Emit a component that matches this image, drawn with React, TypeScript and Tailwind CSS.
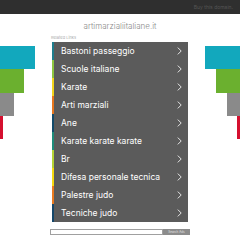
const links = [
  { label: "Bastoni passeggio", stripe: "border-[#1e7d8c]" },
  { label: "Scuole italiane", stripe: "border-[#8dc63f]" },
  { label: "Karate", stripe: "border-[#f2d51c]" },
  { label: "Arti marziali", stripe: "border-[#e8771e]" },
  { label: "Ane", stripe: "border-[#134b6b]" },
  { label: "Karate karate karate", stripe: "border-[#1e8c7a]" },
  { label: "Br", stripe: "border-[#b5d334]" },
  { label: "Difesa personale tecnica", stripe: "border-[#f5d90f]" },
  { label: "Palestre judo", stripe: "border-[#ea7a1f]" },
  { label: "Tecniche judo", stripe: "border-[#15476a]" },
];

const Chevron = () => (
  <svg width="5" height="8" viewBox="0 0 5 8" fill="none">
    <polyline points="0.8,0.6 4.2,4 0.8,7.4" stroke="#e6e6e6" strokeWidth="1" />
  </svg>
);

export default function App() {
  return (
    <div className="w-[240px] h-[240px] bg-white overflow-hidden font-['Inter','Noto_Sans',sans-serif]">
      {/* top bar */}
      <div className="h-[14px] bg-[#2f2f2f] flex items-center justify-end pr-[7px]">
        <span className="text-[5px] leading-[6px] text-[#555555]">Buy this domain.</span>
      </div>

      <div className="flex">
        {/* left bars */}
        <div className="w-[50px] flex flex-col items-start pt-[32px]">
          <div className="h-[23px] w-[35px] bg-[#12a8bd]" />
          <div className="h-[24px] w-[24px] bg-[#6bb02f]" />
          <div className="h-[23px] w-[14px] bg-[#8a8a8a]" />
          <div className="h-[23px] w-[3px] bg-[#d5102f]" />
        </div>

        {/* center */}
        <div className="w-[140px] flex flex-col">
          <div className="mt-[6px] text-center text-[8px] leading-[12px] font-light text-[#8a8a8a]">artimarzialiitaliane.it</div>
          <div className="mt-[3px] mb-[1px] pl-[1px] text-[4px] leading-[6px] text-[#aaaaaa]">Related Links</div>
          <div className="ml-[2px] w-[136px] flex flex-col">
            {links.map((l) => (
              <div
                key={l.label}
                className={`h-[18px] flex items-center justify-between bg-[#5b5b5b] border-l-2 ${l.stripe} pl-[7px] pr-[6px]`}
              >
                <span className="text-[8.5px] leading-[10px] text-white">{l.label}</span>
                <Chevron />
              </div>
            ))}
          </div>
          <div className="mt-[7px] flex">
            <div className="w-[113px] h-[6px] border border-[#a0a0a0] bg-white" />
            <div className="w-[27px] h-[6px] bg-[#8c8c8c] flex items-center justify-center">
              <span className="text-[3px] leading-[4px] text-[#e0e0e0]">Search Ads</span>
            </div>
          </div>
        </div>

        {/* right bars */}
        <div className="w-[50px] flex flex-col items-end pt-[32px]">
          <div className="h-[23px] w-[35px] bg-[#12a8bd]" />
          <div className="h-[24px] w-[24px] bg-[#6bb02f]" />
          <div className="h-[23px] w-[13px] bg-[#8a8a8a]" />
          <div className="h-[23px] w-[3px] bg-[#d5102f]" />
        </div>
      </div>
    </div>
  );
}
